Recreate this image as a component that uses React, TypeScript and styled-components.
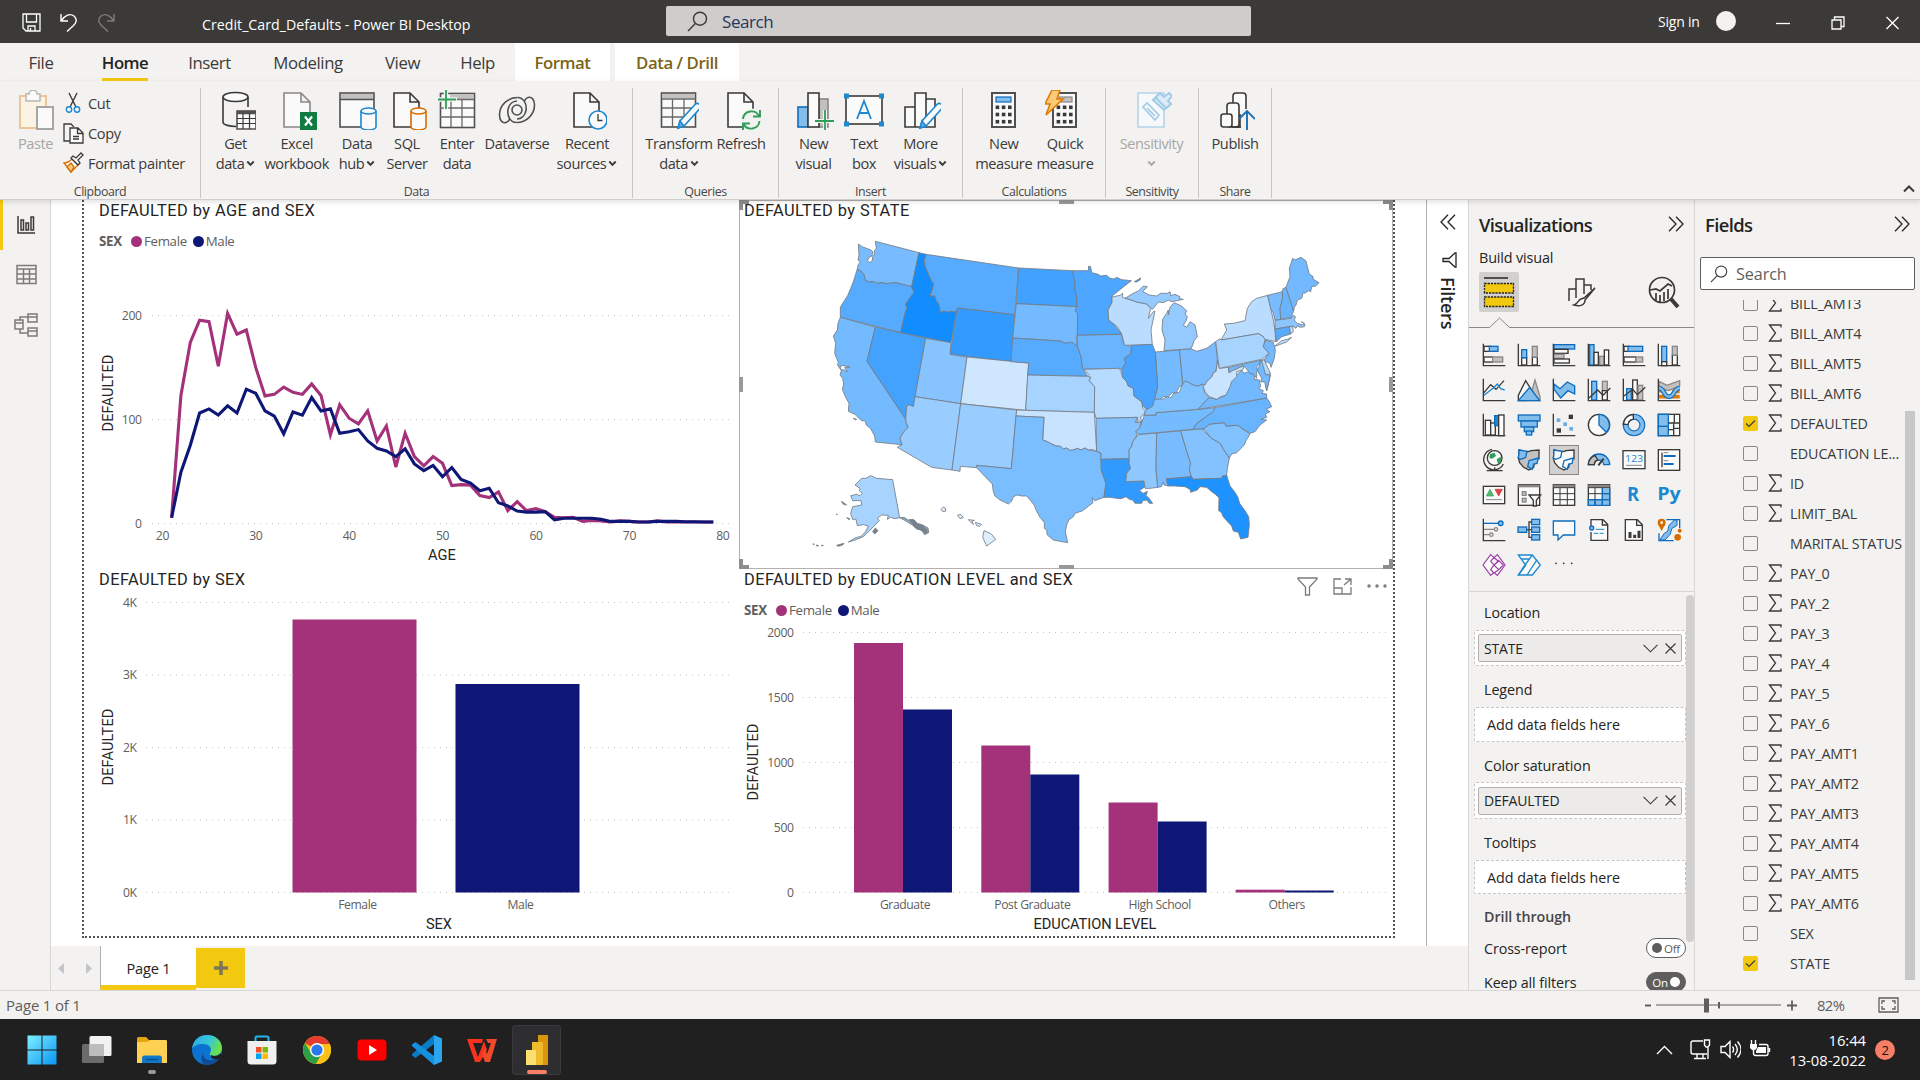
import React from "react";
import styled, { createGlobalStyle, css } from "styled-components";

const UI = `"Open Sans", "Noto Sans", sans-serif`;
const DIN = `Roboto, "Liberation Sans", sans-serif`;
const PINK = "#a4327a";
const NAVY = "#0e1776";
const INK = "#3b3a39";
const BLUE = "#0f6cbd";
const SKY = "#83bdec";
const GREY = "#c3c1c0";

const Global = createGlobalStyle`
  *, *::before, *::after { box-sizing: border-box; }
  body { margin: 0; background: #f3f2f1; font: 15px ${UI}; letter-spacing: -0.42px; color: #252423; overflow: hidden; }
  svg { display: block; flex: none; }
`;

const Window = styled.div`
  width: 1920px; height: 1080px; display: flex; flex-direction: column; overflow: hidden; white-space: nowrap;
`;

/* ---------- title bar ---------- */
const TitleBar = styled.header`
  height: 43px; flex: none; display: flex; align-items: center; background: #3b3a38; color: #fff; padding-left: 22px;
`;
const QuickActions = styled.div`display: flex; gap: 19px; width: 180px; padding-top: 2px;`;
const DocName = styled.div`width: 464px; font-size: 14.2px; padding-top: 5px; letter-spacing: 0.02px;`;
const TopSearch = styled.div`
  width: 585px; height: 30px; margin-top: -1px; background: #cecdcb; border-radius: 2px; display: flex; align-items: center;
  gap: 14px; padding-left: 21px; color: #26355c; font-size: 17px;
`;
const SignIn = styled.div`margin-left: 407px; width: 58px; font-size: 14px; letter-spacing: -0.2px; padding-bottom: 1px;`;
const Avatar = styled.div`width: 20px; height: 20px; border-radius: 50%; background: #f3f2f1; margin-top: -1px;`;
const WinButtons = styled.div`display: flex; gap: 41px; margin-left: 40px; padding-top: 3px;`;

/* ---------- ribbon ---------- */
const Tabs = styled.nav`height: 38px; flex: none; display: flex;`;
const Tab = styled.div<{ $w: number; $on?: boolean; $ctx?: boolean; $gap?: number }>`
  width: ${p => p.$w}px; flex: none; height: 38px; margin-left: ${p => p.$gap || 0}px; display: flex; justify-content: center; align-items: center;
  font-size: 16.8px; color: #3b3a39;
  ${p => p.$on && css`color: #252423; font-weight: 600; letter-spacing: -0.55px;`}
  ${p => p.$ctx && css`background: #fff; color: #7c6415; font-weight: 600; letter-spacing: -0.45px;`}
  span { border-bottom: 3px solid ${p => (p.$on ? "#f2c811" : "transparent")}; height: 38px; line-height: 39px; }
`;
const Ribbon = styled.div`
  height: 119px; flex: none; display: flex; border-bottom: 1px solid #d0cecc; padding-top: 7px; position: relative; z-index: 2;
  box-shadow: 0 2px 5px rgba(0,0,0,.12);
`;
const Group = styled.section<{ $w: number }>`
  width: ${p => p.$w}px; height: 110px; border-right: 1px solid #c8c6c4; display: flex; flex-direction: column; justify-content: space-between;
`;
const Buttons = styled.div<{ $pl?: number }>`display: flex; padding: 2px 0 0 ${p => p.$pl || 0}px;`;
const GroupLabel = styled.div`text-align: center; font-size: 12.4px; line-height: 14px; color: #494745; margin-bottom: -1px;`;
const Big = styled.div<{ $w: number; $off?: boolean }>`
  width: ${p => p.$w}px; flex: none; display: flex; flex-direction: column; align-items: center; font-size: 14.6px; line-height: 20px;
  color: ${p => (p.$off ? "#a8a6a4" : "#3b3a39")};
  & > svg { margin-bottom: 3px; }
`;
const Line = styled.div`display: flex; align-items: center; gap: 2px; height: 20px;`;
const Smalls = styled.div`display: flex; flex-direction: column; padding-left: 7px; margin-top: -2px;`;
const Small = styled.div`height: 30px; display: flex; align-items: center; gap: 3px; font-size: 14.6px; letter-spacing: -0.36px; color: #3b3a39;`;
const Collapse = styled.div`margin-left: auto; align-self: flex-end; padding: 0 5px 6px 0;`;

/* ---------- middle ---------- */
const Middle = styled.main`flex: 1; min-height: 0; display: flex;`;
const Rail = styled.aside`width: 51px; border-right: 1px solid #d9d7d5; display: flex; flex-direction: column;`;
const RailItem = styled.div<{ $on?: boolean }>`
  height: 50px; border-left: 3px solid ${p => (p.$on ? "#f2c811" : "transparent")}; display: flex; align-items: center; padding-left: 11px;
`;
const Center = styled.div`width: 1375px; display: flex; flex-direction: column;`;
const Canvas = styled.div`height: 746px; background: #fff; padding-left: 31px;`;
const Sheet = styled.div`
  width: 1313px; height: 738px; border: 2px dotted #55534f; border-top: 0; display: grid;
  grid-template: 369px 367px / 655px 654px;
`;
const Visual = styled.section<{ $sel?: boolean; $pl: number }>`
  position: relative; display: flex; flex-direction: column; padding-left: ${p => p.$pl}px; overflow: hidden;
  ${p => p.$sel && css`outline: 1px solid #b3b0ad; outline-offset: -1px;`}
`;
const VTitle = styled.h3`
  margin: 0; height: 20px; font: 400 16.4px/21px ${DIN}; color: #252423; letter-spacing: 0.42px;
`;
const Legend = styled.div<{ $gap?: number }>`
  display: flex; align-items: center; height: 22px; margin: 10px 0 ${p => p.$gap || 0}px; font-size: 13.3px; color: #605e5c; letter-spacing: -0.36px;
  b { margin-right: 9px; letter-spacing: -0.2px; }
`;
const Dot = styled.i<{ $c: string }>`width: 11px; height: 11px; border-radius: 50%; background: ${p => p.$c}; margin: 0 2px 0 0;`;
const Name = styled.span`margin-right: 6px;`;
const Handle = styled.i<{ $pos: string; $corner?: string }>`
  position: absolute; ${p => p.$pos} ${p => (p.$corner ? css`width: 10px; height: 10px; border: 0 solid #8f8d8b;` : css`background: #999;`)}
  ${p => p.$corner}
`;
const VTools = styled.div`position: absolute; right: 6px; top: 8px; display: flex; gap: 15px; align-items: center;`;

const PageTabs = styled.div`height: 44px; display: flex;`;
const Arrows = styled.div`width: 49px; display: flex; align-items: center; justify-content: space-between; padding: 0 7px 0 6px;`;
const PageTab = styled.div`
  width: 96px; height: 44px; background: #fff; border-left: 1px solid #b3b0ad; border-bottom: 5px solid #f2c811; display: flex;
  align-items: center; justify-content: center; font-size: 14.6px; letter-spacing: -0.2px; font-weight: 500; padding-top: 4px;
`;
const AddPage = styled.div`width: 49px; height: 40px; margin-top: 2px; background: #f2c811; display: flex; align-items: center; justify-content: center;`;

const Filters = styled.aside`
  width: 42px; background: #fff; border-left: 1px solid #b3b0ad; display: flex; flex-direction: column; align-items: center; height: 746px; padding-top: 14px;
`;
const FilterGlyph = styled.div`margin-top: 22px; padding-left: 4px;`;
const FiltersLabel = styled.div`writing-mode: vertical-rl; font-size: 18px; font-weight: 600; margin-top: 9px; letter-spacing: -0.2px;`;

const Pane = styled.aside<{ $w: number }>`width: ${p => p.$w}px; border-left: 1px solid #d9d7d5; display: flex; flex-direction: column; overflow: hidden;`;
const PaneHead = styled.div`
  height: 50px; flex: none; display: flex; align-items: center; justify-content: space-between; padding: 0 10px 2px 10px; font-size: 18.4px; font-weight: 600; letter-spacing: -0.62px;
`;
const BuildLabel = styled.div`height: 16px; line-height: 16px; padding-left: 10px; font-size: 14.4px; font-weight: 500; letter-spacing: -0.15px;`;
const Modes = styled.div`height: 40px; margin-top: 6px; display: flex; justify-content: space-between; padding: 0 10px; align-items: center;`;
const Mode = styled.div<{ $on?: boolean }>`width: 40px; height: 40px; border-radius: 2px; display: grid; place-items: center; background: ${p => (p.$on ? "#d2d0ce" : "none")};`;
const Gallery = styled.div`
  display: grid; grid-template-columns: repeat(6, 35px); grid-auto-rows: 35px; padding: 6px 0 0 8px; height: 259px; flex: none;
`;
const Cell = styled.div<{ $on?: boolean }>`
  width: 30px; height: 30px; margin: 2px; display: grid; place-items: center;
  ${p => p.$on && css`background: #d2d0ce; box-shadow: inset 0 0 0 1px #8a8886;`}
  svg { overflow: visible; }
`;
const Wells = styled.div`flex: 1; min-height: 0; border-top: 1px solid #d9d7d5; position: relative; padding: 8px 8px 0 5px; overflow: hidden;`;
const WellName = styled.div<{ $h: number; $first?: boolean; $strong?: boolean }>`
  height: ${p => p.$h}px; padding: ${p => (p.$first ? "0 0 5px 10px" : "7px 0 0 10px")}; display: flex; align-items: center;
  font-size: 14.3px; line-height: 18px; letter-spacing: -0.08px;
  ${p => p.$strong && css`font-weight: 600; color: #484644;`}
`;
const Well = styled.div<{ $h: number }>`
  height: ${p => p.$h}px; width: 212px; background: #fff; border: 1px dashed #c8c6c4; border-radius: 2px; padding: 4px 3px; display: flex; align-items: center;
  font-size: 14.3px; letter-spacing: -0.03px;
`;
const Hint = styled.span`padding-left: 9px;`;
const Chip = styled.div`
  width: 205px; height: 28px; background: #edebe9; border: 1px solid #b3b0ad; border-radius: 2px; display: flex; align-items: center;
  padding: 0 5px; font-size: 14px; letter-spacing: -0.2px; svg:first-of-type { margin-left: auto; margin-right: 7px; }
`;
const SwitchRow = styled.div`display: flex; align-items: center; justify-content: space-between; width: 212px; height: 34px; padding-left: 10px; font-size: 14.3px; letter-spacing: -0.1px;`;
const Switches = styled.div`margin-top: -1px;`;
const Switch = styled.div<{ $on?: boolean }>`
  width: 40px; height: 20px; border-radius: 10px; border: 1px solid #605e5c; display: flex; align-items: center; justify-content: center; gap: 2px;
  font-size: 11.5px; letter-spacing: -0.3px; background: ${p => (p.$on ? "#605e5c" : "#fff")}; color: ${p => (p.$on ? "#fff" : "#605e5c")};
  i { width: 10px; height: 10px; border-radius: 50%; background: ${p => (p.$on ? "#fff" : "#605e5c")}; }
`;
const Thumb = styled.i<{ $w: number; $h: number; $t: number; $r: number; $c: string; $rad?: number }>`
  position: absolute; width: ${p => p.$w}px; height: ${p => p.$h}px; top: ${p => p.$t}px; right: ${p => p.$r}px; background: ${p => p.$c}; border-radius: ${p => p.$rad || 0}px;
`;
const FieldSearch = styled.div`
  width: 215px; height: 33px; flex: none; margin: 7px 0 10px 5px; border: 1px solid #605e5c; border-radius: 2px; background: #fff; display: flex;
  align-items: center; gap: 8px; padding-left: 9px; font-size: 16.2px; color: #605e5c; letter-spacing: -0.1px;
`;
const FieldList = styled.div`flex: 1; min-height: 0; position: relative; overflow: hidden;`;
const Fields = styled.div`margin-top: -12px;`;
const Field = styled.div`
  height: 30px; display: grid; grid-template-columns: 25px 22px 1fr; align-items: center; padding-left: 48px; font-size: 14.3px; color: #3b3a39; letter-spacing: -0.12px;
`;
const Check = styled.i<{ $on?: boolean }>`
  width: 15px; height: 15px; border-radius: 2px; border: 1px solid ${p => (p.$on ? "#f2c811" : "#8a8886")}; background: ${p => (p.$on ? "#f2c811" : "transparent")}; display: block;
`;

/* ---------- bottom ---------- */
const Status = styled.footer`
  height: 29px; flex: none; border-top: 1px solid #d9d7d5; display: flex; align-items: center; padding: 0 21px 0 6px; color: #605e5c; font-size: 15px; letter-spacing: -0.2px;
`;
const Zoom = styled.div`margin-left: auto; display: flex; align-items: center; svg:last-child { margin-left: 31px; }`;
const ZoomText = styled.span`margin-left: 20px; font-size: 14.8px; letter-spacing: -0.6px; width: 30px;`;
const Taskbar = styled.div`height: 61px; flex: none; background: #202021; display: flex; align-items: center; color: #fff; padding-left: 14px;`;
const Pinned = styled.div<{ $on?: boolean; $mark?: string }>`
  width: 49px; height: 50px; margin: 0 3px; border-radius: 4px; display: flex; flex-direction: column; align-items: center; padding-top: 10px;
  ${p => p.$on && css`background: #2e2e31; box-shadow: inset 0 0 0 1px #3a3a3d;`}
  &::after { content: ""; width: ${p => (p.$on ? 20 : 8)}px; height: 4px; margin-top: 5px; border-radius: 2px; background: ${p => p.$mark || "transparent"}; }
`;
const Tray = styled.div`margin-left: auto; display: flex; align-items: center; gap: 9px; padding-right: 25px; svg:first-child { margin-right: 8px; }`;
const Clock = styled.div`width: 86px; text-align: right; line-height: 20px; font-size: 14.8px; letter-spacing: -0.05px;`;
const Badge = styled.div`width: 20px; height: 20px; border-radius: 50%; background: #f77f66; color: #111; font-size: 13px; display: grid; place-items: center;`;

/* ---------- small drawings ---------- */
const Chev = ({ c = INK }: { c?: string }) => (
  <svg width="9" height="7" viewBox="0 0 9 7"><path d="M1.300 1.500 4.500 4.800 7.700 1.500" fill="none" stroke={c} strokeWidth="1.900" /></svg>
);
const Lens = ({ c = INK, s = 21 }: { c?: string; s?: number }) => (
  <svg width={s} height={s} viewBox="0 0 21 21" fill="none" stroke={c} strokeWidth="1.400"><circle cx="13" cy="7.700" r="6.500" /><path d="M8.400 12.400 1 20" /></svg>
);
const Dbl = ({ left = false }: { left?: boolean }) => (
  <svg width="16" height="16" viewBox="0 0 16 16" fill="none" stroke="#252423" strokeWidth="1.300">
    <path d={left ? "M8 .8 1 8l7 7.2M15 .8 8 8l7 7.2" : "M1 .8 8 8l-7 7.2M8 .8 15 8l-7 7.2"} />
  </svg>
);

const Ic = ({ children }: { children: React.ReactNode }) => (
  <svg width="40" height="40" viewBox="0 0 40 40" fill="none" stroke={INK} strokeWidth="1.600">{children}</svg>
);
const doc = (x: number, w: number, s = INK) => (
  <path d={`M${x} 3h${w - 9}l9 9v25H${x}zM${x + w - 9} 3v9h9`} fill="#fafafa" stroke={s} />
);
const cyl = (x: number, y: number, w: number, h: number, s: string, f: string) => (
  <><path d={`M${x} ${y + 3}v${h - 6}a${w / 2} 3 0 0 0 ${w} 0v-${h - 6}`} fill={f} stroke={s} /><ellipse cx={x + w / 2} cy={y + 3} rx={w / 2} ry="3" fill={f} stroke={s} /></>
);
const pencil = (
  <><path d="M19 38l2-7L36 14.500a3 3 0 0 1 4.500 4.500L25 36z" fill="#fafafa" stroke="#1e88d0" /><path d="M19 38l2-7 4 5z" fill="#69afe5" stroke="#1e88d0" /></>
);
const calc = (x: number) => (
  <><rect x={x} y="3" width="23" height="34" fill="#fafafa" stroke="#505050" strokeWidth="2" />
    {[0, 1, 2].map(r => [0, 1, 2].map(c => <rect key={`${r}${c}`} x={x + 3.6 + c * 6.2} y={15.500 + r * 7.200} width="3.600" height="3.600" fill={INK} stroke="none" />))}</>
);

const I: Record<string, React.ReactNode> = {
  getData: <Ic><path d="M7 7v25c0 3 7 4.500 13 4.500M32 7v10" /><ellipse cx="19.500" cy="7" rx="12.500" ry="4.500" fill="#fafafa" /><path d="M21 21h19v18H21z" fill="#fafafa" stroke="#505050" /><path d="M21 22.500h19" strokeWidth="3.500" stroke="#505050" /><path d="M27 23v16M33.500 23v16M21 28.500h19M21 33.500h19" strokeWidth="1.200" /></Ic>,
  excel: <Ic>{doc(7, 26, "#8a8886")}<rect x="23" y="22" width="17" height="18" fill="#107c41" stroke="none" /><path d="M28 26.500l7 9M35 26.500l-7 9" stroke="#fff" strokeWidth="2.200" /></Ic>,
  hub: <Ic><rect x="3" y="3" width="34" height="34" fill="#fafafa" stroke="#505050" /><rect x="4" y="4" width="32" height="5" fill="#c3c1c0" stroke="none" /><path d="M3 9.500h34" stroke="#505050" />{cyl(24, 18, 15, 22, "#1e88d0", "#fafafa")}</Ic>,
  sql: <Ic>{doc(7, 25)}{cyl(24, 18, 15, 22, "#d86b00", "#fafafa")}</Ic>,
  enter: <Ic><rect x="3.500" y="3.500" width="34" height="34" fill="#fafafa" stroke="#505050" /><rect x="13" y="4.500" width="24" height="4.500" fill="#c3c1c0" stroke="none" /><path d="M13 9.500h24M3 18h34M3 27h34M14 9v28M25 9v28" stroke="#6b6967" strokeWidth="1.300" /><path d="M9 0v20M0 9.500h20" stroke="#f3f2f1" strokeWidth="4.500" /><path d="M9 0v19M1 9.500h18" stroke="#2f9e58" strokeWidth="1.800" /></Ic>,
  dataverse: <Ic><g stroke="#505050"><path d="M19.500 32.500c10 0 18-8 18-17.500 0-5-2.500-8.500-6.500-7.500-2 .5-3 2-3.500 3.500" /><path d="M20.500 7.500c-10 0-18 8-18 17.500 0 5 2.500 8.500 6.500 7.500 2-.5 3-2 3.500-3.500" /><path d="M20.500 7.500c6 0 9.500 6 8.500 13-1 5-4.500 8.500-9 8.500M19.500 32.500c-6 0-9.500-6-8.500-13 1-5 4.500-8.500 9-8.500" /><circle cx="20" cy="20" r="5" /></g></Ic>,
  recent: <Ic>{doc(7, 25)}<circle cx="31" cy="30" r="9" fill="#fafafa" stroke="#1e88d0" /><path d="M31 24v6.500h4.500" strokeWidth="1.300" /></Ic>,
  transform: <Ic><rect x="2.500" y="3" width="34" height="34" fill="#fafafa" stroke="#505050" /><rect x="3.500" y="4" width="32" height="4.500" fill="#c3c1c0" stroke="none" /><path d="M3 9h34M3 18h34M3 27h22M13.500 9v28M25 9v18" stroke="#6b6967" strokeWidth="1.300" />{pencil}</Ic>,
  refresh: <Ic>{doc(7, 25)}<path d="M20 27a10 10 0 1 1 22 6 10 10 0 1 1-22-6" fill="#f3f2f1" stroke="none" /><path d="M22 29a8.500 8.500 0 0 1 16-3M38.500 31a8.500 8.500 0 0 1-16 3M39 20v6.500h-7M22 40v-6.500h7" stroke="#2f9e58" strokeWidth="1.900" /></Ic>,
  newVisual: <Ic><rect x="25" y="9" width="9" height="28" fill="#c3c1c0" stroke="#8a8886" /><rect x="4" y="17" width="10" height="20" fill="#83bdec" stroke={BLUE} /><rect x="14" y="3" width="11" height="34" fill="#fafafa" /><path d="M31 20v20M21 31h20" stroke="#f3f2f1" strokeWidth="4" /><path d="M31 20v20M21 31h19" stroke="#2f9e58" strokeWidth="1.800" /></Ic>,
  textBox: <Ic><rect x="2" y="6" width="36" height="28" fill="#fafafa" /><g fill="#1e88d0" stroke="none"><rect x="0" y="3.500" width="5" height="5" /><rect x="35" y="3.500" width="5" height="5" /><rect x="0" y="31.500" width="5" height="5" /><rect x="35" y="31.500" width="5" height="5" /></g><path d="M13 29 20 11l7 18M15.500 23h9" stroke="#1e88d0" strokeWidth="1.800" /></Ic>,
  more: <Ic><path d="M25 9h9v28h-9zM4 17h10v20H4zM14 3h11v34H14z" fill="#fafafa" />{pencil}</Ic>,
  newMeasure: <Ic>{calc(8)}<rect x="12" y="7" width="15" height="5" fill="#83bdec" stroke={BLUE} strokeWidth="1.200" /></Ic>,
  quick: <Ic>{calc(8)}<rect x="14" y="7" width="13" height="5" fill="#c3c1c0" stroke="#8a8886" strokeWidth="1.200" /><path d="M7 0h8l-3 9h6L1 25l4-11H0z" fill="#fbc978" stroke="#e07a00" /></Ic>,
  sensitivity: <Ic><path d="M6 3h26v34H6z" fill="#f6f8fa" stroke="#b5d4e8" /><path d="M11 17l4-4 12 12-4 5zM15 18l8 8" stroke="#9fcbe6" /><path d="M21 10l7-7 4 4 5-4 3 3-4 5 3 3-7 6z" fill="#dcecf6" stroke="#9fcbe6" strokeWidth="2" /><path d="M24 8l10 10" stroke="#9fcbe6" strokeWidth="2" /></Ic>,
  publish: <Ic><rect x="18" y="3" width="13" height="34" rx="3" fill="#fafafa" /><rect x="12" y="13" width="12" height="24" rx="3" fill="#fafafa" /><rect x="6" y="24" width="11" height="13" rx="2.500" fill="#fafafa" /><path d="M26 19h15v21H26z" fill="#f3f2f1" stroke="none" /><path d="M17 37h8V24" /><path d="M32 40V22M24 29l8-8 8 8" stroke="#1b6fb0" strokeWidth="1.900" /></Ic>,
  paste: <svg width="36" height="40" viewBox="0 0 36 40" fill="none" strokeWidth="2"><rect x="2" y="6" width="26" height="32" fill="#fbf3e4" stroke="#ecc696" /><path d="M8 4h3a4 4 0 0 1 8 0h3v7H8z" fill="#fafafa" stroke="#b8b6b4" strokeWidth="1.500" /><rect x="19" y="17" width="16" height="22" fill="#fafafa" stroke="#a8a6a4" /></svg>,
};

/* gallery icons are drawn on a 72-unit square */
const G = ({ children }: { children: React.ReactNode }) => (
  <svg width="24" height="24" viewBox="0 0 72 72" fill="none" stroke={INK} strokeWidth="4">{children}</svg>
);
const r = (x: number, y: number, w: number, h: number, f: string, s = INK) => <rect x={x} y={y} width={w} height={h} fill={f} stroke={s} />;
const ax = <path d="M4 2v66h66" />;
const W = "#fafafa";
const DG = "#8a8886";
const mapShape = (a: string, b: string, c: string, stroke: string) => (
  <><path d="M6 6c12 4 26 8 36 2l24-2v26l-12 2-4 24-14 8L20 58 8 44 4 30c2-8 2-16 2-24z" fill={b} stroke={stroke} />
    <path d="M6 6l24 4-4 18-14 6-8-4c2-8 2-16 2-24z" fill={a} stroke={BLUE} /><path d="M36 38l28-8-4 16-10 2-4 16-14-8z" fill={c} stroke={BLUE} /></>
);
const gallery: React.ReactNode[] = [
  <G>{r(6, 10, 20, 15, W)}{r(22, 10, 26, 15, SKY, BLUE)}{r(6, 42, 26, 15, W)}{r(32, 42, 30, 15, GREY, DG)}{ax}</G>,
  <G>{r(14, 44, 15, 22, W)}{r(14, 20, 15, 24, SKY, BLUE)}{r(46, 42, 15, 24, W)}{r(46, 10, 15, 32, GREY, DG)}{ax}</G>,
  <G>{r(6, 5, 62, 13, SKY, BLUE)}{r(6, 19, 42, 12, W)}{r(6, 34, 30, 12, GREY, DG)}{r(6, 48, 46, 12, W)}{ax}</G>,
  <G>{r(8, 5, 13, 61, SKY, BLUE)}{r(21, 28, 13, 38, W)}{r(38, 40, 13, 26, GREY, DG)}{r(52, 21, 13, 45, W)}{ax}</G>,
  <G>{r(6, 10, 16, 15, W)}{r(18, 10, 44, 15, SKY, BLUE)}{r(6, 42, 36, 15, W)}{r(42, 42, 20, 15, GREY, DG)}{ax}</G>,
  <G>{r(14, 10, 15, 46, SKY, BLUE)}{r(14, 56, 15, 12, W)}{r(46, 36, 15, 30, W)}{r(46, 10, 15, 26, GREY, DG)}{ax}</G>,
  <G><path d="M4 46l22-26 16 14 24-26" /><path d="M6 52l28-22 12-12 10 14 12 4" stroke="#1e88d0" />{ax}</G>,
  <G><path d="M36 68 54 6l15 50v12z" fill={GREY} stroke={DG} /><path d="M4 52 26 8l24 38-20 22H4z" fill={W} /><path d="M4 68 38 28l30 40z" fill={SKY} stroke={BLUE} /></G>,
  <G><path d="M6 18l18 14 22-20 22 12v24l-20-10-22 22L6 34z" fill={SKY} stroke={BLUE} />{ax}</G>,
  <G>{r(14, 10, 15, 56, SKY, BLUE)}{r(46, 10, 15, 28, GREY, DG)}{r(46, 38, 15, 28, W)}<path d="M6 60l26-24 16 16 22-22" />{ax}</G>,
  <G>{r(14, 32, 14, 34, SKY, BLUE)}{r(32, 6, 14, 60, W)}{r(48, 22, 14, 44, GREY, DG)}<path d="M6 54l26-20 14 16 24-22" />{ax}</G>,
  <G><path d="M6 10l24 12L68 8v16L34 38 6 30z" fill={GREY} stroke={DG} /><path d="M6 38h20M46 40h22M6 56h24M44 56h24" stroke="#e07a00" strokeWidth="11" /><path d="M6 30c18 2 12 26 30 26s12-24 32-26" stroke={BLUE} strokeWidth="14" /><path d="M6 30c18 2 12 26 30 26s12-24 32-26" stroke={SKY} strokeWidth="7" />{ax}</G>,
  <G>{r(10, 22, 16, 44, W)}{r(26, 30, 14, 36, W)}{r(38, 8, 12, 30, "#1e88d0", BLUE)}{r(50, 6, 16, 62, W)}{ax}</G>,
  <G>{r(4, 6, 65, 18, SKY, BLUE)}{r(12, 24, 49, 18, SKY, BLUE)}{r(22, 42, 28, 14, SKY, BLUE)}{r(28, 54, 16, 12, SKY, BLUE)}</G>,
  <G>{ax}<g stroke="none"><rect x="50" y="5" width="13" height="13" fill={INK} /><rect x="14" y="46" width="13" height="13" fill={INK} /><g fill="#69afe5"><rect x="14" y="16" width="11" height="11" /><rect x="34" y="28" width="11" height="11" /><rect x="52" y="42" width="11" height="11" /></g></g></G>,
  <G><circle cx="36" cy="36" r="32" fill={W} /><path d="M36 4a32 32 0 0 1 22 54L36 36z" fill={SKY} stroke={BLUE} /></G>,
  <G><circle cx="36" cy="36" r="25" stroke={BLUE} strokeWidth="18" /><circle cx="36" cy="36" r="25" stroke={SKY} strokeWidth="11" /><path d="M11 36a25 25 0 0 1 25-25" stroke={INK} strokeWidth="18" /><path d="M11.500 32a25 25 0 0 1 20.500-20.500" stroke={W} strokeWidth="10" /></G>,
  <G>{r(4, 4, 64, 64, W)}{r(4, 4, 30, 40, SKY, BLUE)}{r(4, 40, 30, 28, SKY, BLUE)}<path d="M34 30h34M52 4v26M50 30v38M34 50h16M50 46h18" /></G>,
  <G><circle cx="38" cy="30" r="22" fill={W} /><path d="M24 18l14-4 4 10-12 8-8-2zM44 34l12-8 2 12-10 10z" fill="#2f9e58" stroke="none" /><path d="M30 4a31 31 0 1 0 34 44M38 58v9M14 68h48" /></G>,
  <G>{mapShape(SKY, GREY, SKY, INK)}</G>,
  <G>{mapShape(W, W, W, INK)}</G>,
  <G><path d="M4 50a32 32 0 0 1 64 0H50a14 14 0 0 0-28 0z" fill={SKY} stroke={BLUE} /><path d="M4 50a32 32 0 0 1 20-28l8 14a14 14 0 0 0-10 14z" fill={GREY} stroke={INK} /><path d="M34 52l16-20" strokeWidth="6" /></G>,
  <G>{r(3, 8, 66, 54, W)}<text x="9" y="43" fontSize="28" fontFamily="Open Sans" fill="#1e88d0" stroke="none" textLength="54" lengthAdjust="spacingAndGlyphs">123</text><path d="M12 52h48" stroke={DG} strokeWidth="3" /></G>,
  <G>{r(4, 5, 64, 62, W)}<path d="M15 14v44" /><path d="M20 24h36M20 48h30" stroke={BLUE} strokeWidth="6" /><path d="M20 14h14M20 38h14" stroke={DG} strokeWidth="3" /></G>,
  <G>{r(4, 10, 64, 52, W)}<path d="M13 39 24 19l11 20z" fill="#5cb474" stroke="#2f9e58" strokeWidth="2" /><path d="M39 19h22L50 39z" fill="#e04343" stroke="#c33" strokeWidth="2" /><path d="M12 50h48" stroke={DG} strokeWidth="3" /></G>,
  <G>{r(4, 5, 64, 62, W)}<path d="M4 9h64" stroke={DG} strokeWidth="8" />{r(16, 26, 11, 11, GREY, DG)}{r(16, 46, 11, 11, GREY, DG)}<path d="M36 36h35L58 52v17h-9V52z" fill={W} /></G>,
  <G>{r(4, 5, 64, 62, W)}<path d="M4 9h64" stroke={DG} strokeWidth="8" /><path d="M4 14h64M24 14v52M46 14v52M4 32h64M4 50h64" strokeWidth="3" /></G>,
  <G>{r(4, 5, 64, 62, W)}<path d="M4 9h64" stroke={DG} strokeWidth="8" /><path d="M46 16h22v51H4V50h42z" fill={SKY} stroke="none" /><path d="M4 14h64M24 14v52M46 14v52M4 32h64M4 50h64" strokeWidth="3" /><path d="M46 16v34H4v17h64V16M24 50v17M46 50v17M46 50h22M46 32h22" stroke={BLUE} /></G>,
  <G><text x="15" y="54" fontSize="56" fontWeight="700" fontFamily="Open Sans" fill="#1e88d0" stroke="none" textLength="36" lengthAdjust="spacingAndGlyphs">R</text></G>,
  <G><text x="1" y="50" fontSize="54" fontWeight="700" fontFamily="Open Sans" fill="#1e88d0" stroke="none" textLength="70" lengthAdjust="spacingAndGlyphs">Py</text></G>,
  <G>{ax}<path d="M6 16h42" stroke={BLUE} /><circle cx="56" cy="16" r="7" fill={SKY} stroke={BLUE} /><path d="M6 34h30M6 50h18" stroke={DG} /><circle cx="42" cy="34" r="5" stroke={DG} /><circle cx="28" cy="50" r="5" stroke={DG} /></G>,
  <G><path d="M28 35h18M46 12H36v46h10" /><g>{r(3, 27, 26, 16, SKY, BLUE)}{r(44, 4, 24, 16, SKY, BLUE)}{r(44, 27, 24, 16, SKY, BLUE)}{r(44, 50, 24, 16, SKY, BLUE)}</g></G>,
  <G><path d="M4 9h64v42H34L18 66V51H4z" fill={W} stroke={BLUE} /></G>,
  <G><path d="M12 24V5h36l14 14v48H12V42M46 5v16h16" fill={W} /><circle cx="14" cy="30" r="6" fill={SKY} stroke={BLUE} /><path d="M26 34h26M20 46h14M38 46h12" stroke="#1e88d0" strokeWidth="3" /></G>,
  <G><path d="M10 5h36l15 15v47H10zM44 5v17h17" fill={W} /><path d="M24 60V42M38 60V50M51 60V38" strokeWidth="9" /></G>,
  <G><path d="M28 5h40v26M6 46v22h44" fill={W} stroke={BLUE} /><path d="M60 6v16L44 32l-4 16-16 18H8l14-20 10-6 4-18 16-16z" fill={SKY} stroke={BLUE} strokeWidth="3" /><path d="M2 14a12 12 0 0 1 24 0c0 8-8 14-12 26C10 28 2 22 2 14z" fill="#d86b00" stroke="none" /><circle cx="14" cy="14" r="4" fill={W} stroke="none" /><circle cx="62" cy="58" r="10" fill="#d86b00" stroke="none" /><circle cx="68" cy="38" r="6" fill="#d86b00" stroke="none" /></G>,
  <G><g stroke="#9b3fa5" fill={W} strokeWidth="3.500"><path d="M36 14 26 5 3 36l23 31 10-9 10 9 23-31L46 5z" /><path d="M36 14l14 11-14 11-10-11zM36 36l14 14-14 10-10-10zM50 22l14 14-14 14-14-14z" /></g></G>,
  <G><g stroke="#1e88d0" fill={W} strokeWidth="4"><path d="M4 6h42l24 30-24 30H4l22-30z" /><path d="M46 6 14 50M60 20 30 66M26 36 4 66M14 18h22" /></g></G>,
  <G><g fill={INK} stroke="none"><circle cx="12" cy="31" r="2.800" /><circle cx="35" cy="31" r="2.800" /><circle cx="59" cy="31" r="2.800" /></g></G>,
];

/* ---------- charts ---------- */
const female = [5, 123, 174, 195.5, 194, 151, 202, 182, 186, 150, 122.5, 124, 131, 126, 124, 134, 123, 85, 114, 101, 95.5, 108, 79, 93.5, 54, 86.5, 64, 55, 64, 57.5, 36, 37, 36.5, 26.5, 24.5, 30, 12, 20.5, 12, 14, 11, 5.5, 5, 5.5, 1.5, 2.5, 2, 1, 2, 1.5, 1, 1, 2, 1, 1, 1, 1, 1, 1];
const male = [5, 49, 75, 106, 110, 104, 113, 106, 129, 125, 108, 103, 86, 107, 104, 121, 108, 110, 86.5, 88, 90, 79, 72, 69.5, 64, 71.5, 57, 50.5, 55.5, 44.5, 53.5, 42, 38.5, 31, 33.5, 19.5, 16.5, 11.5, 10.5, 10.5, 11, 3, 4.5, 4.5, 4.5, 4.5, 3.5, 1.5, 1.5, 1.5, 1, 1, 1.5, 1.5, 1.5, 1.3, 1.2, 1, 1];
const path = (d: number[]) => d.map((v, i) => `${(171.6 + i * 9.34).toFixed(1)},${(524 - v * 1.0375).toFixed(1)}`).join(" ");

const ChartSvg = styled.svg`
  text { font: 12.2px ${UI}; letter-spacing: -0.42px; fill: #605e5c; }
  text.title { font: 14.6px ${DIN}; letter-spacing: 0.1px; fill: #252423; }
  .grid { stroke: #c8c6c4; stroke-dasharray: 1 5; }
`;
const Axis = ({ x, cy }: { x: number; cy: number }) => (
  <text className="title" transform={`translate(${x} ${cy}) rotate(-90)`} textAnchor="middle" textLength="77">DEFAULTED</text>
);
const LineChart = () => (
  <ChartSvg width="640" height="312" viewBox="99 257 640 312">
    {[[200, 316.5], [100, 420.5], [0, 524.5]].map(([t, y]) => (
      <g key={t}><text x="141.500" y={y + 4} textAnchor="end">{t}</text><path className="grid" d={`M152 ${y}H731`} /></g>
    ))}
    {[20, 30, 40, 50, 60, 70, 80].map((t, i) => <text key={t} x={162.4 + i * 93.4} y="541" textAnchor="middle">{t}</text>)}
    <polyline points={path(female)} fill="none" stroke={PINK} strokeWidth="3.100" />
    <polyline points={path(male)} fill="none" stroke={NAVY} strokeWidth="3.100" />
    <text className="title" x="442" y="561" textAnchor="middle">AGE</text>
    <Axis x={112.5} cy={394} />
  </ChartSvg>
);
const SexChart = () => (
  <ChartSvg width="640" height="347" viewBox="99 588.500 640 347">
    {["4K", "3K", "2K", "1K", "0K"].map((t, i) => (
      <g key={t}><text x="136.500" y={606.5 + i * 72.4} textAnchor="end">{t}</text><path className="grid" d={`M146 ${602 + i * 72.5}H731`} /></g>
    ))}
    <rect x="292.500" y="619" width="124" height="273" fill={PINK} />
    <rect x="455.500" y="683.500" width="124" height="208.500" fill={NAVY} />
    <text x="357.500" y="908.500" textAnchor="middle">Female</text>
    <text x="520.500" y="908.500" textAnchor="middle">Male</text>
    <text className="title" x="439" y="928.500" textAnchor="middle" textLength="26">SEX</text>
    <Axis x={112.5} cy={746.5} />
  </ChartSvg>
);
const edu: [string, number, number, number][] = [["Graduate", 854, 643, 709.5], ["Post Graduate", 981.3, 745.5, 774.5], ["High School", 1108.6, 802.5, 821.5], ["Others", 1235.7, 889.7, 890.5]];
const EduChart = () => (
  <ChartSvg width="648" height="315" viewBox="744 621 648 315">
    {[2000, 1500, 1000, 500, 0].map((t, i) => (
      <g key={t}><text x="793.500" y={637 + i * 64.9} textAnchor="end">{t}</text><path className="grid" d={`M803 ${632.5 + i * 65}H1389`} /></g>
    ))}
    {edu.map(([n, x, a, b]) => (
      <g key={n}><rect x={x} y={a} width="49" height={892.5 - a} fill={PINK} /><rect x={x + 49} y={b} width="49" height={892.5 - b} fill={NAVY} />
        <text x={x + 51} y="909" textAnchor="middle">{n}</text></g>
    ))}
    <text className="title" x="1095" y="929" textAnchor="middle" textLength="123">EDUCATION LEVEL</text>
    <Axis x={757.5} cy={762} />
  </ChartSvg>
);

/* west and centre outlines share one origin, the eastern ones are shifted by 870 units */
const west: [string, string][] = [
  ["#78bcff", "175,42 181,46 188,51 197,54 213,60 219,66 216,78 207,82 203,92 207,98 217,92 218,80 224,72 223,62 229,55 226,34 357,68 335,170 311,164 286,158 260,161 245,158 232,160 222,155 208,156 196,152 193,136 184,124 172,117 175,103 181,96 174,90 177,75"],
  ["#57abff", "172,117 184,124 193,136 196,152 208,156 222,155 232,160 245,158 260,161 286,158 311,164 335,170 342,187 328,206 317,222 321,235 315,250 302,308 121,262 121,232 133,212 143,197 152,175 160,155"],
  ["#118dff", "357,68 378,73 373,90 375,107 386,134 394,152 401,160 398,176 390,198 404,197 409,212 417,222 421,247 430,243 445,246 455,243 462,246 470,241 453,338 302,308 315,250 321,235 317,222 328,206 342,187 335,170"],
  ["#57abff", "378,73 656,114 644,254 472,234 470,243 462,246 455,243 445,246 430,243 421,247 417,222 409,212 404,197 390,198 398,176 401,160 394,152 386,134 375,107 373,90"],
  ["#339aff", "472,234 644,254 633,395 450,373"],
  ["#74baff", "121,262 226,291 201,394 317,567 319,580 325,592 312,604 300,624 306,644 226,636 224,618 212,596 198,584 197,574 183,571 165,553 145,544 147,520 136,500 127,478 131,462 128,445 120,435 124,422 112,404 115,398 104,370 107,340 100,318 112,300 114,280"],
  ["#fff", "120,408 130,407 150,411 134,413 142,425 130,419 123,420"],
  ["#44a2ff", "226,291 377,325 345,500 340,530 328,524 320,528 317,567 201,394"],
  ["#87c4ff", "377,325 453,338 450,373 501,381 482,521 345,500"],
  ["#cfe6ff", "501,381 686,399 677,541 482,521"],
  ["#99ccff", "345,500 482,521 456,720 395,712 292,652 306,644 300,624 312,604 325,592 319,580 317,567 320,528 328,524 340,530"],
  ["#99ccff", "482,521 650,540 634,716 530,706 530,713 481,709 480,724 456,720"],
  ["#41a1ff", "656,114 817,122 825,155 825,180 831,205 830,230 649,221"],
  ["#74baff", "649,221 830,230 826,243 833,250 832,316 829,320 832,348 815,340 795,340 782,333 638,324"],
  ["#57abff", "638,324 782,333 795,340 815,336 832,348 843,380 848,415 863,439 683,435 686,399 633,395"],
  ["#a6d3ff", "683,435 863,439 872,442 868,452 884,470 883,547 677,541"],
  ["#c7e3ff", "650,540 883,547 890,664 878,658 865,660 855,654 843,660 832,655 820,660 810,661 800,654 790,657 781,649 768,648 755,642 742,635 728,630 732,562 648,558"],
  ["#7abeff", "648,558 732,562 728,630 742,635 755,642 768,648 781,649 790,657 800,654 810,661 820,660 832,655 843,660 855,654 865,660 890,664 903,669 903,718 918,760 912,802 884,812 876,803 879,818 866,828 848,842 825,850 820,860 806,870 800,885 796,905 803,938 780,934 760,930 742,915 740,900 733,895 733,878 720,862 709,842 703,826 692,812 680,798 665,798 652,795 640,800 636,812 625,822 600,810 585,798 580,785 577,762 560,745 530,713 530,706 634,716"],
  ["#4da6ff", "817,122 865,122 866,108 872,110 875,128 895,133 902,138 920,136 930,145 942,147 950,142 965,149 994,152 965,175 936,198 936,218 924,240 926,270 943,285 965,312 832,316 833,250 826,243 831,230 831,205 825,180 825,155"],
  ["#a6d4ff", "165,765 185,745 197,745 212,737 230,745 278,749 299,863 285,866 272,862 262,868 265,856 245,855 232,865 238,872 225,885 208,903 190,920 165,930 145,936 165,924 185,918 198,903 205,888 190,884 172,887 168,868 158,868 152,850 158,830 185,825 183,812 158,812 152,797 170,793 180,797 187,790 178,782 180,775"],
  ["#8fa6bb", "299,863 312,862 328,872 340,868 352,880 368,885 384,894 386,908 374,914 364,900 350,897 338,886 318,873"],
  ["#77828d", "328,868 345,872 350,882 366,886 382,902 378,910 362,900 345,892 335,878"],
  ["#77828d", "218,905 226,894 234,902 224,912"], ["#77828d", "110,946 132,940 128,945 115,949"], ["#77828d", "124,814 131,818 140,825 130,823"],
  ["#77828d", "39,941 43,943 40,944"], ["#77828d", "49,945 56,947 50,948"], ["#77828d", "64,946 70,946 66,948"],
  ["#77828d", "140,863 150,866 146,869"], ["#77828d", "109,852 112,853 110,855"],
  ["#74baff", "160,565 170,568 166,570"],
  ["#ddeeff", "423,838 430,831 437,835 436,844 427,844"], ["#ddeeff", "472,856 482,853 490,863 480,866"], ["#ddeeff", "505,869 523,871 516,873 520,884"],
  ["#ddeeff", "526,877 545,883 539,889 530,887"], ["#ddeeff", "552,902 573,911 587,928 560,948 548,922"],
];
const east: [string, string][] = [
  ["#69b4ff", "-38,316 95,313 100,338 125,352 122,372 103,385 107,400 95,418 88,415 -17,418 -22,415 -27,380 -38,348"],
  ["#b6dbff", "-17,418 88,415 95,430 98,442 110,455 115,468 130,475 132,498 155,515 158,535 167,542 160,556 152,560 155,577 146,572 140,577 143,562 18,565 13,547 14,470 -2,452 2,442"],
  ["#84c2ff", "18,565 143,562 135,577 152,577 150,592 138,604 140,618 128,635 125,650 117,660 118,686 33,688 33,669 20,664"],
  ["#319aff", "33,688 118,686 117,700 122,715 110,730 107,755 162,753 165,770 148,782 160,790 172,784 168,797 176,803 188,820 178,820 170,810 158,812 155,820 135,820 128,810 118,808 108,800 93,806 80,805 60,802 42,802 48,760 35,725"],
  ["#8fc8ff", "145,613 200,609 198,715 203,772 180,775 165,775 162,753 107,755 110,730 122,715 117,700 118,686 117,660 125,650 128,635"],
  ["#78bcff", "200,609 272,602 289,660 302,700 298,718 304,740 229,747 235,768 222,765 220,756 214,770 203,772 198,715"],
  ["#84c2ff", "272,602 342,596 340,602 365,625 390,640 405,665 418,684 412,715 410,736 398,738 395,745 310,748 304,740 298,718 302,700 289,660"],
  ["#1e93ff", "229,747 304,740 310,748 395,745 398,738 410,736 420,768 432,783 443,800 449,820 465,842 476,860 478,885 474,922 452,927 445,907 430,903 425,888 410,872 398,858 395,848 386,842 387,803 376,793 365,785 350,772 330,770 322,780 302,787 300,778 285,770 255,768 235,768"],
  ["#80c1ff", "340,596 360,582 403,578 408,588 443,586 480,612 468,632 463,645 440,668 425,672 418,684 405,665 390,640 365,625"],
  ["#69b4ff", "374,533 530,504 538,515 545,530 528,538 540,545 526,552 530,562 512,568 530,570 510,585 495,605 480,610 443,586 408,588 403,578 360,582 340,596 308,598 320,580 355,555"],
  ["#75bbff", "163,556 198,555 198,548 324,538 374,533 370,545 355,555 320,580 308,598 145,613 138,604 150,592"],
  ["#80c1ff", "163,556 167,540 185,530 193,508 205,502 217,508 232,500 243,503 252,488 268,488 278,460 286,453 298,458 310,465 325,468 338,462 345,490 358,503 345,515 324,538 198,548 198,555"],
  ["#73b9ff", "324,538 345,515 358,503 380,508 408,495 420,465 425,455 440,435 455,420 462,430 475,425 495,435 492,448 508,450 512,470 505,475 520,482 516,490 530,492 530,504"],
  ["#73b9ff", "527,434 541,435 537,455 530,482 526,455"],
  ["#c9e4ff", "382,390 388,415 415,412 417,428 430,418 440,418 452,408 462,410 458,420 440,425 440,440 425,455 420,470 408,495 392,500 380,508 358,500 345,485 340,470 350,455 365,440 370,428 378,425"],
  ["#7abcff", "268,360 303,356 320,364 350,355 377,335 382,390 378,420 370,428 365,440 350,455 345,465 338,462 325,468 310,465 298,458 286,453 278,460"],
  ["#75bbff", "196,366 268,360 278,465 268,470 258,490 248,487 235,500 220,500 212,507 193,508 203,470"],
  ["#47a3ff", "123,345 187,343 196,366 203,470 193,508 188,528 180,533 168,538 160,530 155,515 132,498 130,475 115,468 110,455 98,442 95,418 107,400 103,385 122,372 125,352"],
  ["#badcff", "66,201 90,196 98,190 98,203 115,207 140,216 170,222 182,235 175,265 190,245 195,243 183,300 187,343 104,346 95,312 82,290 56,270 54,240 66,218"],
  ["#94caff", "105,205 130,190 145,183 160,168 172,170 158,185 178,195 200,198 212,190 232,190 240,185 242,197 255,193 270,200 268,206 280,208 260,212 245,215 235,210 220,218 205,216 195,228 188,238 180,232 170,222 140,216 115,207"],
  ["#94caff", "252,218 275,228 290,243 285,252 292,260 288,273 280,285 290,292 300,275 315,285 322,320 312,332 308,345 303,356 222,362 225,330 216,300 218,268 230,250 235,240 235,255 240,232"],
  ["#4da6ff", "133,155 152,144 150,150 140,156"],
  ["#b9dcff", "393,330 410,300 403,282 430,280 465,272 472,235 485,215 500,205 533,196 542,235 550,270 555,300 557,335 525,328 518,318 505,311"],
  ["#a6d4ff", "377,335 390,326 393,330 505,311 518,318 525,328 520,350 537,370 515,388 388,415"],
  ["#b9dcff", "552,350 575,332 592,328 605,322 590,336 560,347"],
  ["#73b9ff", "527,330 550,338 556,360 553,385 543,412 540,400 520,392 537,370 520,350"],
  ["#73b9ff", "417,412 515,390 506,404 500,410 504,425 515,445 512,455 524,456 530,482 541,435 527,434 519,390 510,392 508,408 500,425 500,445 488,430 482,432 462,408 440,415 417,428"],
  ["#b0d8ff", "515,393 522,388 542,432 527,434"],
  ["#78bcff", "533,196 577,185 578,205 570,235 572,268 555,271 550,250 542,235"],
  ["#69b4ff", "577,185 579,176 588,172 611,243 603,262 572,268 570,235 578,205"],
  ["#73b9ff", "588,172 600,140 598,115 608,85 615,90 633,82 648,93 658,133 668,138 670,148 687,158 677,168 665,170 662,185 655,182 645,190 640,187 635,205 622,210 618,225 613,232 611,243"],
  ["#8cc6ff", "555,271 603,265 611,255 617,262 612,270 622,280 638,285 642,280 634,275 645,282 643,290 630,292 622,287 618,295 608,288 555,297"],
  ["#57abff", "555,298 598,290 602,312 575,320 560,335"],
  ["#c0e0ff", "598,290 608,290 610,305 602,312"],
];
const shapes = (a: [string, string][]) => a.map(([f, p], i) => <polygon key={i} points={p} fill={f} />);
const UsMap = () => (
  <svg width="600" height="340" viewBox="-168 -30 1800 1020" stroke="#737b83" strokeWidth="2.500" strokeLinejoin="round">
    {shapes(west)}<g transform="translate(870 0)">{shapes(east)}</g>
  </svg>
);

const SexLegend = ({ gap }: { gap?: number }) => (
  <Legend $gap={gap}><b>SEX</b><Dot $c={PINK} /><Name>Female</Name><Dot $c={NAVY} /><Name>Male</Name></Legend>
);

const fields: [string, boolean?, boolean?][] = [
  ["BILL_AMT3", true], ["BILL_AMT4", true], ["BILL_AMT5", true], ["BILL_AMT6", true], ["DEFAULTED", true, true], ["EDUCATION LE..."], ["ID", true], ["LIMIT_BAL", true],
  ["MARITAL STATUS"], ["PAY_0", true], ["PAY_2", true], ["PAY_3", true], ["PAY_4", true], ["PAY_5", true], ["PAY_6", true], ["PAY_AMT1", true], ["PAY_AMT2", true],
  ["PAY_AMT3", true], ["PAY_AMT4", true], ["PAY_AMT5", true], ["PAY_AMT6", true], ["SEX"], ["STATE", false, true],
];

const ChipRow = ({ name }: { name: string }) => (
  <Chip>{name}
    <svg width="15" height="9" viewBox="0 0 15 9" fill="none" stroke={INK} strokeWidth="1.100"><path d="M.5.8l7 7 7-7" /></svg>
    <svg width="11" height="11" viewBox="0 0 11 11" stroke={INK} strokeWidth="1.200"><path d="M.5.5l10 10M10.500.5l-10 10" /></svg>
  </Chip>
);

const BigBtn = ({ w, icon, a, b, drop, off }: { w: number; icon: string; a: string; b?: string; drop?: boolean; off?: boolean }) => (
  <Big $w={w} $off={off}>{I[icon]}<Line>{a}</Line>{(b || drop) && <Line>{b}{drop && <Chev c={off ? "#a8a6a4" : INK} />}</Line>}</Big>
);

const TaskIcons = () => (
  <>
    <Pinned><svg width="30" height="30" viewBox="0 0 30 30"><defs><linearGradient id="win" x1="0" y1="0" x2="1" y2="1"><stop offset="0" stopColor="#7df0ff" /><stop offset="1" stopColor="#0a94f5" /></linearGradient></defs><path fill="url(#win)" d="M.5.5h14v14H.5zM15.500.5h14v14h-14zM.5 15.500h14v14H.5zM15.500 15.500h14v14h-14z" /></svg></Pinned>
    <Pinned><svg width="30" height="30" viewBox="0 0 30 30"><rect x="0" y="9" width="22" height="19" rx="1.500" fill="#6b6b6b" /><rect x="7.500" y="1" width="22" height="20" rx="1.500" fill="#f2f2f2" /><path d="M7.500 9H22v12H7.500z" fill="#bdbdbd" /></svg></Pinned>
    <Pinned $mark="#9a9a9a"><svg width="30" height="30" viewBox="0 0 30 30"><path d="M0 3.500Q0 2 1.500 2H9l3 3h16q2 0 2 2v8H0z" fill="#e5a50b" /><path d="M0 7h10l3-2h16l1 1v22H0z" fill="#ffd052" /><path d="M5 28v-5q0-2.500 2.500-2.500h15Q25 20.500 25 23v5z" fill="#1279c9" /><path d="M8.500 24.500h13" stroke="#0b4f8c" strokeWidth="1.500" /></svg></Pinned>
    <Pinned><svg width="30" height="30" viewBox="0 0 30 30"><defs><linearGradient id="edge" x1="0" y1="0" x2="1" y2=".4"><stop offset="0" stopColor="#2aa7e8" /><stop offset=".6" stopColor="#35c8d8" /><stop offset="1" stopColor="#6be04c" /></linearGradient></defs><circle cx="15" cy="15" r="15" fill="#0c72cf" /><path d="M0 14C1 5 7 0 15 0c9 0 15 6 15 13 0 5-4 8-9 8-3 0-4-1-3-3 3-6-2-9-7-9S1 11 0 14z" fill="url(#edge)" /><path d="M11 20c1 4 5 6 10 5 3-.5 5-1.500 7-3-3 6-9 9-16 7.500C8 26 9 19 13 17c-2 1-2.500 2-2 3z" fill="#124a94" /><path d="M19 20c3 2 8 1 10-2l1 4-3 2c-5 1-9-1-8-4z" fill="#202021" /></svg></Pinned>
    <Pinned><svg width="30" height="30" viewBox="0 0 30 30"><path d="M8.500 6V3q0-1.500 1.500-1.500h10q1.500 0 1.500 1.500v3" fill="none" stroke="#20b8ee" strokeWidth="2" /><path d="M.5 6h29v20q0 3.500-3.500 3.500H4Q.5 29.500.5 26z" fill="#f0f0f0" /><path d="M9 12h5.500v5.500H9z" fill="#f25022" /><path d="M15.500 12H21v5.500h-5.500z" fill="#7fba00" /><path d="M9 18.500h5.500V24H9z" fill="#00a4ef" /><path d="M15.500 18.500H21V24h-5.500z" fill="#ffb900" /></svg></Pinned>
    <Pinned><svg width="30" height="30" viewBox="0 0 30 30"><circle cx="15" cy="15" r="14" fill="#fbc116" /><path d="M15 15 2.900 8A14 14 0 0 1 27.600 9z" fill="#e33b2e" /><path d="M3 8a14 14 0 0 0 11 21l6-10.500-11-.5z" fill="#2a9f47" /><path d="M27.600 9H15v6l5 3.500L14 29A14 14 0 0 0 27.600 9z" fill="#fbc116" /><circle cx="15" cy="15" r="7" fill="#fff" /><circle cx="15" cy="15" r="5.600" fill="#2a77ee" /></svg></Pinned>
    <Pinned><svg width="30" height="30" viewBox="0 0 30 30"><rect x=".5" y="4.500" width="29" height="21" rx="4" fill="#f00" /><path d="M12 10v10l8-5z" fill="#fff" /></svg></Pinned>
    <Pinned><svg width="30" height="30" viewBox="0 0 30 30"><path d="M22 0v9L3.500 23 0 20.500V19z" fill="#0a7bc4" /><path d="M22 30v-9L3.500 7 0 9.500V11z" fill="#1490dd" /><path d="M22 0l8 3.500v23L22 30z" fill="#2ba5ee" /></svg></Pinned>
    <Pinned><svg width="30" height="30" viewBox="0 0 30 30"><path d="M0 4h16l-1 4H6l5 14L17 6l3 9-7 12H8z" fill="#f8321d" /><path d="M19 4h11l-7 23h-5l-3-8 3-6 2 6 4-11h-3z" fill="#f2492a" /></svg></Pinned>
    <Pinned $on $mark="#f77f66"><svg width="30" height="30" viewBox="0 0 30 30"><path d="M16 0h10v30H16z" fill="#d9960c" /><path d="M10 7h11v23H10z" fill="#f0bb2b" /><path d="M4 15h10v15H4z" fill="#f9e070" /></svg></Pinned>
  </>
);

export default function App() {
  return (
    <Window>
      <Global />
      <TitleBar>
        <QuickActions>
          <svg width="19" height="19" viewBox="0 0 19 19" fill="none" stroke="#fff" strokeWidth="1.300"><path d="M1 1h17v17H4l-3-3zM4.500 1v8h10V1M6 18v-5h7v5M8.500 15v3" /></svg>
          <svg width="18" height="19" viewBox="0 0 18 19" fill="none" stroke="#fff" strokeWidth="1.400"><path d="M1 1v7h7M1.500 7.500C5 2 10 0 14 3c4 4 2 7-1 10l-6 5.500" /></svg>
          <svg width="18" height="19" viewBox="0 0 18 19" fill="none" stroke="#7d7b79" strokeWidth="1.400"><path d="M17 1v7h-7M16.500 7.500C13 2 8 0 4 3 0 7 2 10 5 13l6 5.500" /></svg>
        </QuickActions>
        <DocName>Credit_Card_Defaults - Power BI Desktop</DocName>
        <TopSearch><Lens />Search</TopSearch>
        <SignIn>Sign in</SignIn><Avatar />
        <WinButtons>
          <svg width="14" height="14" viewBox="0 0 14 14" stroke="#fff" strokeWidth="1.300"><path d="M0 7.500h14" /></svg>
          <svg width="14" height="14" viewBox="0 0 14 14" fill="none" stroke="#fff" strokeWidth="1.300"><path d="M1 4h9v9H1zM3.500 4V1H13v9.500h-3" /></svg>
          <svg width="13" height="14" viewBox="0 0 13 14" stroke="#fff" strokeWidth="1.300"><path d="M.5 1l12 12M12.500 1l-12 12" /></svg>
        </WinButtons>
      </TitleBar>

      <Tabs>
        <Tab $w={82}><span>File</span></Tab><Tab $w={86} $on><span>Home</span></Tab><Tab $w={83}><span>Insert</span></Tab>
        <Tab $w={114}><span>Modeling</span></Tab><Tab $w={75}><span>View</span></Tab><Tab $w={75}><span>Help</span></Tab>
        <Tab $w={95} $ctx><span>Format</span></Tab><Tab $w={124} $gap={5} $ctx><span>Data / Drill</span></Tab>
      </Tabs>

      <Ribbon>
        <Group $w={201}>
          <Buttons $pl={15}>
            <Big $w={41} $off>{I.paste}<Line>Paste</Line></Big>
            <Smalls>
              <Small><svg width="22" height="22" viewBox="0 0 22 22" fill="none" stroke={INK} strokeWidth="1.400"><path d="M6 1l7 14M14 1L7 15" /><circle cx="6" cy="17.500" r="2.700" stroke="#1e88d0" /><circle cx="14" cy="17.500" r="2.700" stroke="#1e88d0" /></svg>Cut</Small>
              <Small><svg width="22" height="22" viewBox="0 0 22 22" fill="none" stroke={INK} strokeWidth="1.300"><path d="M7 19H1V2h7l3 3" /><path d="M7 6h8l5 5v10H7zM14.500 6v5.500H20M10 14.500h6M10 17h6" fill="#fafafa" /></svg>Copy</Small>
              <Small><svg width="22" height="22" viewBox="0 0 22 22" fill="none" stroke={INK} strokeWidth="1.300"><path d="M9 7l6 6-7 7-7-9c3 0 5-1 8-4z" fill="#fff" stroke="#d86b00" /><path d="M4 15l4-4 3 4-3 5z" fill="#fbc978" stroke="#d86b00" /><path d="M8 6l7 7 2-2-2-3 5-5-2-2-5 5-3-2z" fill="#fafafa" /></svg>Format painter</Small>
            </Smalls>
          </Buttons>
          <GroupLabel>Clipboard</GroupLabel>
        </Group>
        <Group $w={432}>
          <Buttons $pl={6}>
            <BigBtn w={57} icon="getData" a="Get" b="data" drop /><BigBtn w={65.4} icon="excel" a="Excel" b="workbook" /><BigBtn w={55.2} icon="hub" a="Data" b="hub" drop />
            <BigBtn w={44.8} icon="sql" a="SQL" b="Server" /><BigBtn w={55.2} icon="enter" a="Enter" b="data" /><BigBtn w={64.8} icon="dataverse" a="Dataverse" />
            <BigBtn w={75.2} icon="recent" a="Recent" b="sources" drop />
          </Buttons>
          <GroupLabel>Data</GroupLabel>
        </Group>
        <Group $w={146}>
          <Buttons $pl={8}><BigBtn w={76} icon="transform" a="Transform" b="data" drop /><BigBtn w={48} icon="refresh" a="Refresh" /></Buttons>
          <GroupLabel>Queries</GroupLabel>
        </Group>
        <Group $w={184}>
          <Buttons $pl={10}><BigBtn w={49} icon="newVisual" a="New" b="visual" /><BigBtn w={52} icon="textBox" a="Text" b="box" /><BigBtn w={61} icon="more" a="More" b="visuals" drop /></Buttons>
          <GroupLabel>Insert</GroupLabel>
        </Group>
        <Group $w={143}>
          <Buttons $pl={12}><BigBtn w={57.4} icon="newMeasure" a="New" b="measure" /><BigBtn w={65.2} icon="quick" a="Quick" b="measure" /></Buttons>
          <GroupLabel>Calculations</GroupLabel>
        </Group>
        <Group $w={93}><Buttons><BigBtn w={91} icon="sensitivity" a="Sensitivity" drop off /></Buttons><GroupLabel>Sensitivity</GroupLabel></Group>
        <Group $w={73}><Buttons><BigBtn w={72} icon="publish" a="Publish" /></Buttons><GroupLabel>Share</GroupLabel></Group>
        <Collapse><svg width="12" height="9" viewBox="0 0 12 9"><path d="M1 7.500 6 2.500l5 5" fill="none" stroke={INK} strokeWidth="2" /></svg></Collapse>
      </Ribbon>

      <Middle>
        <Rail>
          <RailItem $on><svg width="22" height="20" viewBox="0 0 22 20" fill="none" stroke={INK} strokeWidth="1.500"><path d="M4 1v17h17M7 5h2.500v10H7zM12 8h2.500v7H12zM17 2h2.500v13H17z" /></svg></RailItem>
          <RailItem><svg width="24" height="22" viewBox="0 0 24 22" fill="none" stroke="#7d7b79" strokeWidth="1.500"><path d="M3 1.500h19v18H3zM3 5h19M3 10h19M3 15h19M9.500 5v14M15.500 5v14" /></svg></RailItem>
          <RailItem><svg width="24" height="24" viewBox="0 0 24 24" fill="none" stroke="#7d7b79" strokeWidth="1.500"><path d="M1 7h8v9H1zM1 10h8M14 1h9v8h-9zM14 4h9M14 15h9v8h-9zM14 18h9M6 7V4h8M6 16v4h8" /></svg></RailItem>
        </Rail>
        <Center>
          <Canvas>
            <Sheet>
              <Visual $pl={15}><VTitle>DEFAULTED by AGE and SEX</VTitle><SexLegend gap={4} /><LineChart /></Visual>
              <Visual $pl={5} $sel>
                <VTitle>DEFAULTED by STATE</VTitle><UsMap />
                <Handle $pos="left: 0; top: 0;" $corner="border-width: 4px 0 0 4px;" /><Handle $pos="right: 0; top: 0;" $corner="border-width: 4px 4px 0 0;" />
                <Handle $pos="left: 0; bottom: 0;" $corner="border-width: 0 0 4px 4px;" /><Handle $pos="right: 0; bottom: 0;" $corner="border-width: 0 4px 4px 0;" />
                <Handle $pos="left: 320px; top: 0; width: 15px; height: 4px;" /><Handle $pos="left: 320px; bottom: 0; width: 15px; height: 4px;" />
                <Handle $pos="left: 0; top: 177px; width: 4px; height: 15px;" /><Handle $pos="right: 0; top: 177px; width: 4px; height: 15px;" />
              </Visual>
              <Visual $pl={15}><VTitle>DEFAULTED by SEX</VTitle><SexChart /></Visual>
              <Visual $pl={5}>
                <VTitle>DEFAULTED by EDUCATION LEVEL and SEX</VTitle><SexLegend /><EduChart />
                <VTools>
                  <svg width="21" height="19" viewBox="0 0 21 19" fill="none" stroke="#7d7b79" strokeWidth="1.300"><path d="M1 1h19v1l-7.500 8v8h-4v-8L1 2z" /></svg>
                  <svg width="19" height="17" viewBox="0 0 19 17" fill="none" stroke="#7d7b79" strokeWidth="1.300"><path d="M8 1H1v15h17V9M1 10h8v6M11 7l7-6M12 1h6v6" /></svg>
                  <svg width="20" height="6" viewBox="0 0 20 6" fill="#7d7b79"><circle cx="2" cy="2" r="1.700" /><circle cx="10" cy="2" r="1.700" /><circle cx="18" cy="2" r="1.700" /></svg>
                </VTools>
              </Visual>
            </Sheet>
          </Canvas>
          <PageTabs>
            <Arrows><svg width="7" height="11" viewBox="0 0 7 11"><path d="M7 0v11L1 5.500z" fill="#c3c3cc" /></svg><svg width="7" height="11" viewBox="0 0 7 11"><path d="M0 0v11l6-5.500z" fill="#c3c3cc" /></svg></Arrows>
            <PageTab>Page 1</PageTab>
            <AddPage><svg width="14" height="14" viewBox="0 0 14 14"><path d="M7 0v14M0 7h14" stroke="#7d7658" strokeWidth="3.400" /></svg></AddPage>
          </PageTabs>
        </Center>
        <Filters>
          <Dbl left />
          <FilterGlyph><svg width="15" height="16" viewBox="0 0 15 16" fill="none" stroke="#252423" strokeWidth="1.300"><path d="M14 1v14h-1L7 9.500H1v-3h6L13 1z" /></svg></FilterGlyph>
          <FiltersLabel>Filters</FiltersLabel>
        </Filters>
        <Pane $w={226}>
          <PaneHead>Visualizations<Dbl /></PaneHead>
          <BuildLabel>Build visual</BuildLabel>
          <Modes>
            <Mode $on><svg width="32" height="32" viewBox="0 0 32 32"><path d="M1 2h24" stroke="#252423" strokeWidth="1.500" /><g fill="#f2c811" stroke="#252423" strokeWidth="1.300" strokeDasharray="2.200 1"><rect x="1.500" y="7.500" width="29" height="9.500" /><rect x="1.500" y="21" width="29" height="9.500" /></g></svg></Mode>
            <Mode><svg width="30" height="32" viewBox="0 0 30 32" fill="none" stroke={INK} strokeWidth="1.500"><path d="M2 25V13h7v9M9 13V3h8v15M17 9h7v5" /><path d="M28 12L17 22l-3 1c-3 1-3 5-7 6 6 2 11 0 11-5l10-12z" fill="#fafafa" /></svg></Mode>
            <Mode><svg width="32" height="32" viewBox="0 0 32 32" fill="none" stroke={INK} strokeWidth="1.700"><circle cx="14" cy="14" r="12.500" /><path d="M2 14l6-1 4 2 8-7 4 2M8 17v7M12 19v7M16 16v9M20 13v10" /><path d="M23 23l7 8" strokeWidth="4" /></svg></Mode>
          </Modes>
          <svg width="226" height="20" viewBox="0 0 226 20" fill="none" stroke="#8a8886"><path d="M0 15.500h20.500l10-9.500 10 9.500H226" /></svg>
          <Gallery>{gallery.map((g, i) => <Cell key={i} $on={i === 20}>{g}</Cell>)}</Gallery>
          <Wells>
            <WellName $h={30} $first>Location</WellName><Well $h={36}><ChipRow name="STATE" /></Well>
            <WellName $h={41}>Legend</WellName><Well $h={35}><Hint>Add data fields here</Hint></Well>
            <WellName $h={40}>Color saturation</WellName><Well $h={37}><ChipRow name="DEFAULTED" /></Well>
            <WellName $h={41}>Tooltips</WellName><Well $h={34}><Hint>Add data fields here</Hint></Well>
            <WellName $h={38} $strong>Drill through</WellName>
            <Switches>
              <SwitchRow>Cross-report<Switch><i />Off</Switch></SwitchRow>
              <SwitchRow>Keep all filters<Switch $on>On<i /></Switch></SwitchRow>
            </Switches>
            <Thumb $w={8} $h={347} $t={3} $r={0} $c="#d2d0ce" $rad={4} />
          </Wells>
        </Pane>
        <Pane $w={226}>
          <PaneHead>Fields<Dbl /></PaneHead>
          <FieldSearch><Lens s={18} c="#484644" />Search</FieldSearch>
          <FieldList>
            <Fields>
              {fields.map(([n, sum, on]) => (
                <Field key={n}>
                  <Check $on={on}>{on && <svg width="13" height="13" viewBox="0 0 13 13"><path d="M2 6.500l3 3 6-6" fill="none" stroke={INK} strokeWidth="1.100" /></svg>}</Check>
                  {sum ? <svg width="14" height="18" viewBox="0 0 14 18"><path d="M13 3.500V1H1.500l6 8-6 8H13v-2.500" fill="none" stroke={INK} strokeWidth="1.300" /></svg> : <i />}
                  {n}
                </Field>
              ))}
            </Fields>
            <Thumb $w={10} $h={569} $t={111} $r={5} $c="#c8c8c8" />
          </FieldList>
        </Pane>
      </Middle>

      <Status>
        Page 1 of 1
        <Zoom>
          <svg width="152" height="18" viewBox="0 0 152 18" stroke="#605e5c"><path d="M0 9.500h6M142 9.500h10M147 4.500v10" strokeWidth="1.800" /><path d="M11 9h125" /><path d="M61.500 2.500v14" strokeWidth="5" /><path d="M74 6v6.500" strokeWidth="2" /></svg>
          <ZoomText>82%</ZoomText>
          <svg width="21" height="16" viewBox="0 0 21 16" fill="none" stroke="#605e5c" strokeWidth="1.300"><path d="M1 1h19v14H1z" /><path d="M4 7V4h3M14 4h3v3M17 9v3h-3M7 12H4V9" /></svg>
        </Zoom>
      </Status>

      <Taskbar>
        <TaskIcons />
        <Tray>
          <svg width="17" height="10" viewBox="0 0 17 10" fill="none" stroke="#fff" strokeWidth="1.400"><path d="M1 9l7.500-7.500L16 9" /></svg>
          <svg width="21" height="21" viewBox="0 0 21 21" fill="none" stroke="#fff" strokeWidth="1.400"><path d="M13 2H3Q1 2 1 4v9q0 2 2 2h14M4 19.500h12M7 15v4M13 15v4M14.500 1h5v5l-1.500 2h-2l-1.500-2zM18 8v12" /></svg>
          <svg width="21" height="19" viewBox="0 0 21 19" fill="none" stroke="#fff" strokeWidth="1.400"><path d="M1 6.500h4l5-5v16l-5-5H1zM12.500 6.500c1.500 2 1.500 4 0 6M15 4c3 3.500 3 7.500 0 11M17.500 1.500c4.500 5 4.500 11 0 16" /></svg>
          <svg width="21" height="19" viewBox="0 0 21 19" fill="none" stroke="#fff" strokeWidth="1.400"><path d="M1.500 0v4M5.500 0v4" /><path d="M0 4h7v4L5 10H2L0 8zM8 7h8v6H6v-2z" fill="#fff" stroke="none" /><path d="M9 4.500h7q2 0 2 2v7q0 2-2 2H6q-2.500 0-2.500-2V10M19.500 8v4" /></svg>
          <Clock>16:44<br />13-08-2022</Clock>
          <Badge>2</Badge>
        </Tray>
      </Taskbar>
    </Window>
  );
}
